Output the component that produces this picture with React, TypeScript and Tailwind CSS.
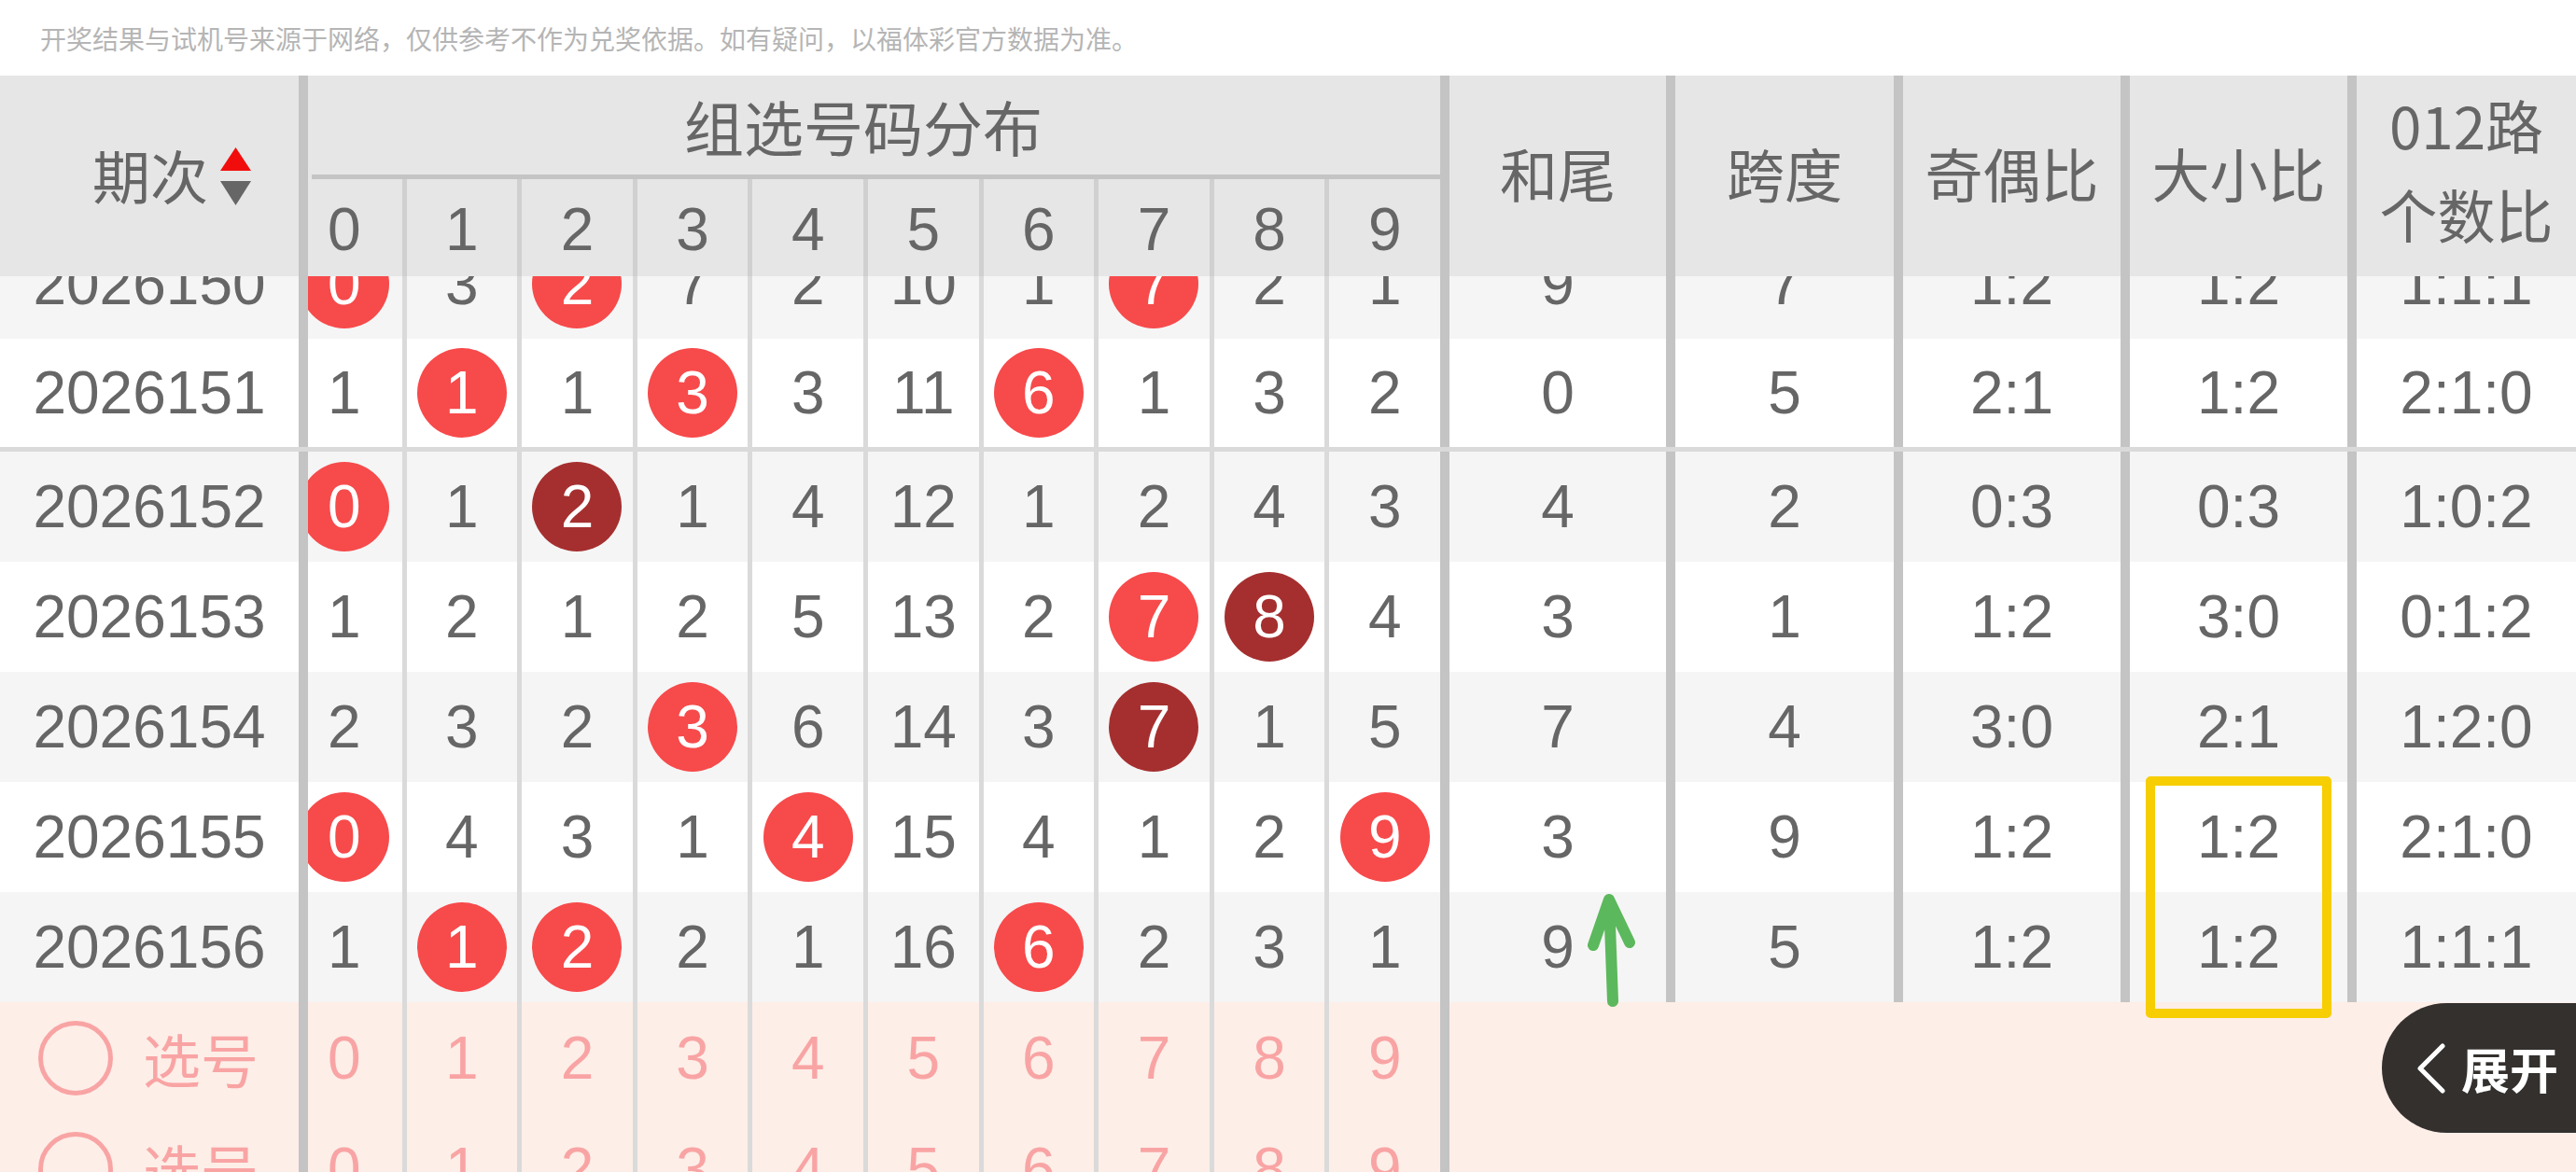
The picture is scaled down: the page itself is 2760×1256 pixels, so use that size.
import React from 'react';

type Ball = 'red' | 'dark';

interface DrawRow {
  issue: string;
  nums: number[];
  balls: Record<number, Ball>;
  stats: string[];
  bg: string;
}

const rows: DrawRow[] = [
  { issue: '2026150', nums: [0, 3, 2, 7, 2, 10, 1, 7, 2, 1], balls: { 0: 'red', 2: 'red', 7: 'red' }, stats: ['9', '7', '1:2', '1:2', '1:1:1'], bg: 'bg-[#f5f5f5]' },
  { issue: '2026151', nums: [1, 1, 1, 3, 3, 11, 6, 1, 3, 2], balls: { 1: 'red', 3: 'red', 6: 'red' }, stats: ['0', '5', '2:1', '1:2', '2:1:0'], bg: 'bg-white' },
  { issue: '2026152', nums: [0, 1, 2, 1, 4, 12, 1, 2, 4, 3], balls: { 0: 'red', 2: 'dark' }, stats: ['4', '2', '0:3', '0:3', '1:0:2'], bg: 'bg-[#f5f5f5]' },
  { issue: '2026153', nums: [1, 2, 1, 2, 5, 13, 2, 7, 8, 4], balls: { 7: 'red', 8: 'dark' }, stats: ['3', '1', '1:2', '3:0', '0:1:2'], bg: 'bg-white' },
  { issue: '2026154', nums: [2, 3, 2, 3, 6, 14, 3, 7, 1, 5], balls: { 3: 'red', 7: 'dark' }, stats: ['7', '4', '3:0', '2:1', '1:2:0'], bg: 'bg-[#f5f5f5]' },
  { issue: '2026155', nums: [0, 4, 3, 1, 4, 15, 4, 1, 2, 9], balls: { 0: 'red', 4: 'red', 9: 'red' }, stats: ['3', '9', '1:2', '1:2', '2:1:0'], bg: 'bg-white' },
  { issue: '2026156', nums: [1, 1, 2, 2, 1, 16, 6, 2, 3, 1], balls: { 1: 'red', 2: 'red', 6: 'red' }, stats: ['9', '5', '1:2', '1:2', '1:1:1'], bg: 'bg-[#f5f5f5]' },
];

const digits = [0, 1, 2, 3, 4, 5, 6, 7, 8, 9];
const statWidths = ['w-[232px]', 'w-[234px]', 'w-[233px]', 'w-[233px]', 'w-[235px]'];

const ThickDivider = () => <div className="w-[10px] shrink-0 self-stretch bg-[#c4c4c4]" />;

// number area is scrolled sideways a little, so column 0 sits under the sticky 期次 column
function NumberArea({ children }: { children: React.ReactNode }) {
  return (
    <div className="w-[1213px] shrink-0 overflow-hidden self-stretch">
      <div className="ml-[-23px] w-[1236px] h-full">{children}</div>
    </div>
  );
}

function NumberCells({ row, height }: { row?: DrawRow; height: string }) {
  return (
    <div className={`grid grid-cols-10 ${height}`}>
      {digits.map((d) => {
        const ball = row ? row.balls[d] : undefined;
        return (
          <div key={d} className={`flex items-center justify-center ${d > 0 ? 'border-l-[5px] border-[#dadada]' : ''}`}>
            {!row ? (
              <span className="text-[#f9a4a4]">{d}</span>
            ) : ball ? (
              <span
                className={`w-[96px] h-[96px] rounded-full flex items-center justify-center text-white ${
                  ball === 'red' ? 'bg-[#f74a4b]' : 'bg-[#a52f2f]'
                }`}
              >
                {d}
              </span>
            ) : (
              <span>{row.nums[d]}</span>
            )}
          </div>
        );
      })}
    </div>
  );
}

function BodyRow({ row, height }: { row: DrawRow; height: string }) {
  return (
    <div className={`flex ${height} ${row.bg}`}>
      <div className="w-[320px] shrink-0 flex items-center justify-center">{row.issue}</div>
      <ThickDivider />
      <NumberArea>
        <NumberCells row={row} height="h-full" />
      </NumberArea>
      <ThickDivider />
      {row.stats.map((s, i) => (
        <React.Fragment key={i}>
          {i > 0 && <ThickDivider />}
          <div className={`${statWidths[i]} shrink-0 flex items-center justify-center`}>{s}</div>
        </React.Fragment>
      ))}
    </div>
  );
}

function PickRow() {
  return (
    <div className="flex h-[119px] bg-[#fdeee8]">
      <div className="w-[320px] shrink-0 flex items-center pl-[41px] gap-[32px] text-[#f9a4a4]">
        <span className="w-[80px] h-[80px] rounded-full border-[5px] border-[#f9a4a4]" />
        <span className="font-['Noto_Sans_CJK_SC',sans-serif] text-[62px]">选号</span>
      </div>
      <ThickDivider />
      <NumberArea>
        <NumberCells height="h-full" />
      </NumberArea>
      <ThickDivider />
      <div className="flex-1" />
    </div>
  );
}

export default function App() {
  const headers = ['和尾', '跨度', '奇偶比', '大小比'];
  return (
    <div className="relative w-[2760px] h-[1256px] overflow-hidden bg-white text-[#666666] font-['Liberation_Sans','Noto_Sans_CJK_SC',sans-serif] text-[64px] leading-none">
      <div className="h-[81px] flex items-center pl-[43px] text-[28px] text-[#b5b5b5] font-['Noto_Sans_CJK_SC',sans-serif]">
        开奖结果与试机号来源于网络，仅供参考不作为兑奖依据。如有疑问，以福体彩官方数据为准。
      </div>

      {/* sticky header */}
      <div className="flex h-[215px] bg-[#e6e6e6]">
        <div className="w-[320px] shrink-0 flex items-center justify-center pl-[48px] pb-[4px] gap-[13px]">
          <span className="font-['Noto_Sans_CJK_SC',sans-serif] text-[62px]">期次</span>
          <span className="flex flex-col gap-[11px] pt-[4px]">
            <svg width="33" height="25" viewBox="0 0 33 25">
              <polygon points="16.5,0 33,25 0,25" fill="#f20d0d" />
            </svg>
            <svg width="33" height="26" viewBox="0 0 33 26">
              <polygon points="0,0 33,0 16.5,26" fill="#666666" />
            </svg>
          </span>
        </div>
        <ThickDivider />
        <NumberArea>
          <div className="flex flex-col h-full">
            <div className="h-[106px] flex items-center justify-center font-['Noto_Sans_CJK_SC',sans-serif] text-[64px]">
              组选号码分布
            </div>
            <div className="h-[5px] bg-[#c4c4c4] ml-[27px]" />
            <div className="grid grid-cols-10 flex-1">
              {digits.map((d) => (
                <div key={d} className={`flex items-center justify-center pt-[4px] ${d > 0 ? 'border-l-[5px] border-[#d0d0d0]' : ''}`}>
                  {d}
                </div>
              ))}
            </div>
          </div>
        </NumberArea>
        <ThickDivider />
        {headers.map((h, i) => (
          <React.Fragment key={h}>
            {i > 0 && <ThickDivider />}
            <div className={`${statWidths[i]} shrink-0 flex items-center justify-center pb-[8px] font-['Noto_Sans_CJK_SC',sans-serif] text-[62px]`}>
              {h}
            </div>
          </React.Fragment>
        ))}
        <ThickDivider />
        <div className={`${statWidths[4]} shrink-0 flex flex-col items-center justify-center pb-[16px] font-['Noto_Sans_CJK_SC',sans-serif] text-[62px] leading-[96px]`}>
          <span>012路</span>
          <span>个数比</span>
        </div>
      </div>

      {/* scrolled body */}
      <div className="h-[960px] overflow-hidden">
        <div className="mt-[-51px]">
          {rows.map((r, i) => (
            <React.Fragment key={r.issue}>
              <BodyRow row={r} height={i === 1 ? 'h-[116px]' : 'h-[118px]'} />
              {i === 1 && <div className="h-[5px] bg-[#dadada]" />}
            </React.Fragment>
          ))}
          <PickRow />
          <PickRow />
        </div>
      </div>

      {/* hand-drawn annotations */}
      <div className="absolute left-[2299px] top-[832px] w-[199px] h-[259px] border-[10px] border-[#f6ce02] rounded-[5px]" />
      <svg className="absolute left-[1690px] top-[940px]" width="80" height="150" viewBox="0 0 80 150">
        <path d="M38 133 L34 24 M17 73 L34 24 L56 70" fill="none" stroke="#5cb85c" strokeWidth="12" strokeLinecap="round" strokeLinejoin="round" />
      </svg>

      {/* 展开 button */}
      <div className="absolute right-0 top-[1075px] w-[208px] h-[139px] rounded-l-full bg-[#33302e] flex items-center pl-[37px] gap-[16px]">
        <svg width="32" height="54" viewBox="0 0 32 54">
          <polyline points="28,3 4,27 28,51" fill="none" stroke="#ffffff" strokeWidth="5" strokeLinecap="round" strokeLinejoin="round" />
        </svg>
        <span className="text-white font-bold text-[52px] font-['Noto_Sans_CJK_SC',sans-serif]">展开</span>
      </div>
    </div>
  );
}
